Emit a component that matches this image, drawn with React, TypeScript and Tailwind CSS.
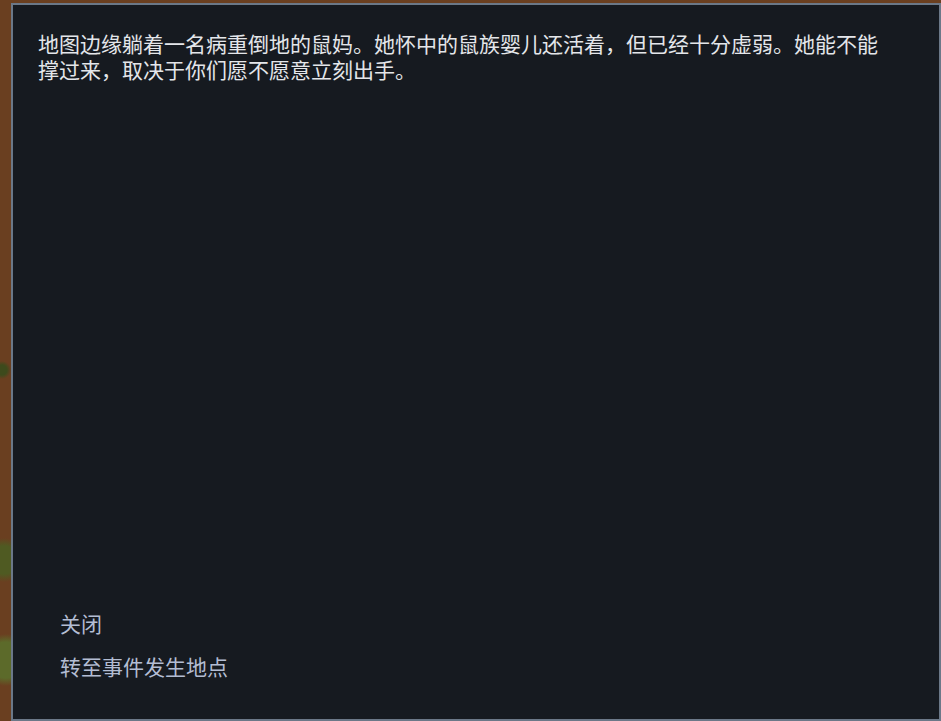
import React from "react";

const story =
  "地图边缘躺着一名病重倒地的鼠妈。她怀中的鼠族婴儿还活着，但已经十分虚弱。她能不能撑过来，取决于你们愿不愿意立刻出手。";

const options = ["关闭", "转至事件发生地点"];

const App: React.FC = () => {
  return (
    <div
      className="h-[721px] w-[941px] overflow-hidden bg-[#6a3f20] bg-[radial-gradient(circle_at_4px_560px,#4f5a22_0,#4f5a22_14px,transparent_22px),radial-gradient(circle_at_6px_660px,#5c6a2a_0,#5c6a2a_18px,transparent_26px),radial-gradient(circle_at_2px_370px,#3d4a1c_0,#3d4a1c_5px,transparent_9px)] pl-[11px] pt-[3px]"
      style={{ fontFamily: '"Noto Sans CJK SC", "Noto Sans", sans-serif' }}
    >
      <div className="flex h-full w-full flex-col justify-between border-2 border-[#6b7888] bg-[#161a20] pb-[39px] pl-[25px] pt-[25px]">
        <p className="w-[855px] text-[21px] leading-[26px] text-[#e4e6ea]">{story}</p>

        <div className="flex flex-col gap-[16px] pl-[22px]">
          {options.map((label) => (
            <button
              key={label}
              className="w-fit text-left text-[21px] leading-[27px] text-[#b3bdd3] hover:text-white"
            >
              {label}
            </button>
          ))}
        </div>
      </div>
    </div>
  );
};

export default App;
